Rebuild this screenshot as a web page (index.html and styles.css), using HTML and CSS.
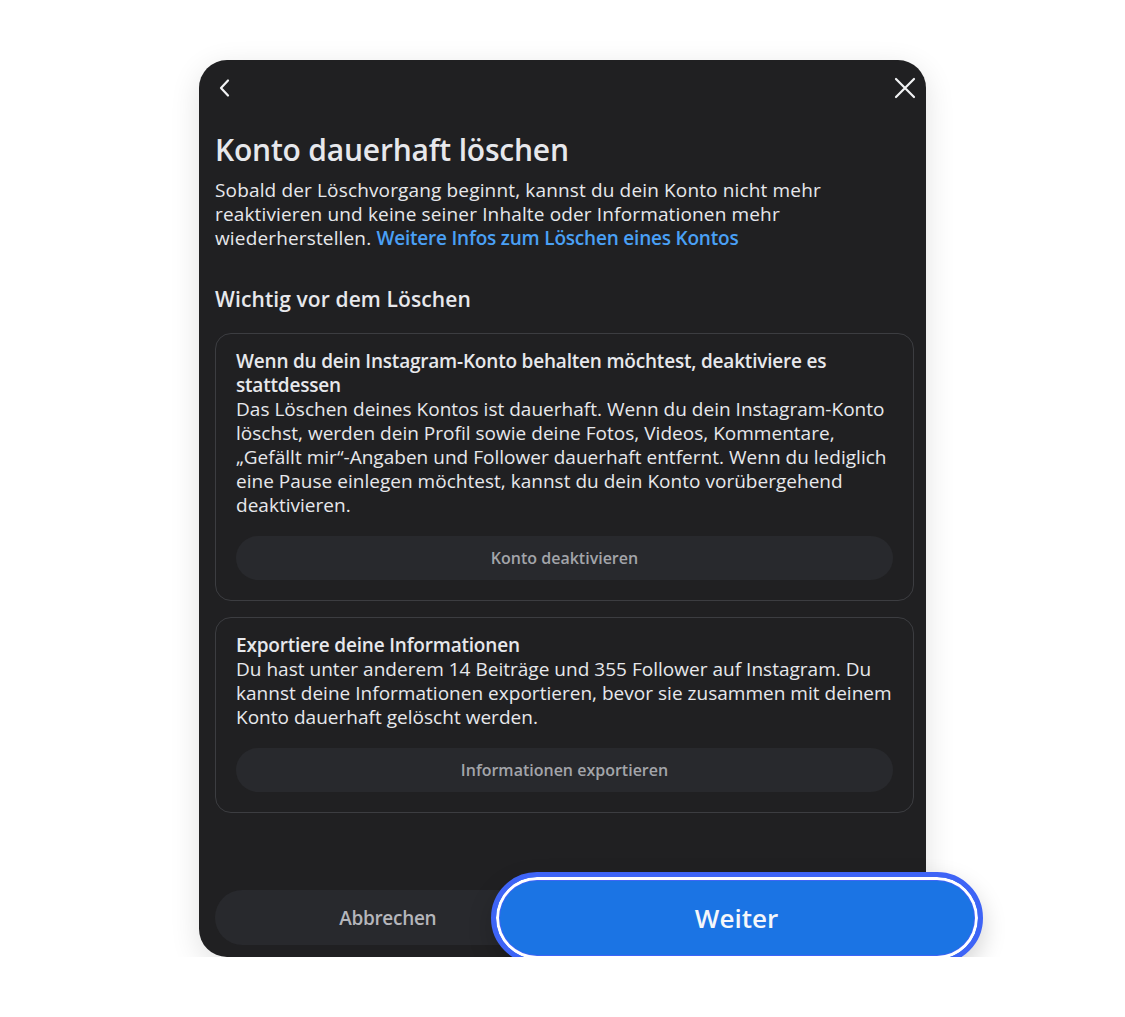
FILE: index.html
```html
<!DOCTYPE html>
<html lang="de">
  <head>
    <meta charset="utf-8">
    <title>Konto dauerhaft löschen</title>
    <link rel="stylesheet" href="styles.css">
  </head>
  <body>
    <div class="dialog">
      <div class="top-bar">
        <button class="icon-button" aria-label="Zurück">
          <svg width="24" height="24" viewBox="0 0 24 24" fill="none" stroke="currentColor" stroke-width="2.2" stroke-linecap="round" stroke-linejoin="round">
            <path d="M15 4.5 L8 12 L15 19.5"/>
          </svg>
        </button>
        <button class="icon-button" aria-label="Schließen">
          <svg width="24" height="24" viewBox="0 0 24 24" fill="none" stroke="currentColor" stroke-width="2.2" stroke-linecap="round">
            <path d="M3 3 L21 21 M21 3 L3 21"/>
          </svg>
        </button>
      </div>

      <h1 class="title">Konto dauerhaft löschen</h1>
      <p class="intro">
        Sobald der Löschvorgang beginnt, kannst du dein Konto nicht mehr reaktivieren und keine seiner Inhalte oder Informationen mehr wiederherstellen.
        <a href="#" class="link">Weitere Infos zum Löschen eines Kontos</a>
      </p>

      <h2 class="section-title">Wichtig vor dem Löschen</h2>

      <div class="info-box">
        <div class="info-title">Wenn du dein Instagram-Konto behalten möchtest, deaktiviere es stattdessen</div>
        <div class="info-text">Das Löschen deines Kontos ist dauerhaft. Wenn du dein Instagram-Konto löschst, werden dein Profil sowie deine Fotos, Videos, Kommentare, „Gefällt mir“-Angaben und Follower dauerhaft entfernt. Wenn du lediglich eine Pause einlegen möchtest, kannst du dein Konto vorübergehend deaktivieren.</div>
        <button class="box-button">Konto deaktivieren</button>
      </div>

      <div class="info-box">
        <div class="info-title">Exportiere deine Informationen</div>
        <div class="info-text">Du hast unter anderem 14 Beiträge und 355 Follower auf Instagram. Du kannst deine Informationen exportieren, bevor sie zusammen mit deinem Konto dauerhaft gelöscht werden.</div>
        <button class="box-button">Informationen exportieren</button>
      </div>

      <div class="footer">
        <button class="cancel-button">Abbrechen</button>
        <div class="next-slot">
          <button class="next-button">Weiter</button>
        </div>
      </div>
    </div>
  </body>
</html>
```

FILE: styles.css
```css
body {
  margin: 0;
  background-color: #ffffff;
  font-family: "Open Sans", "Noto Sans", sans-serif;
  display: flex;
  justify-content: center;
  padding-top: 60px;
}

button {
  font-family: inherit;
  border: none;
  cursor: pointer;
}

.dialog {
  width: 727px;
  height: 897px;
  box-sizing: border-box;
  background-color: #202022;
  border-radius: 28px;
  padding: 0 12px 12px 16px;
  display: flex;
  flex-direction: column;
  color: #e7e8ec;
  box-shadow: 0 8px 30px rgba(0, 0, 0, 0.12);
}

.top-bar {
  display: flex;
  justify-content: space-between;
  align-items: center;
  height: 56px;
  margin: 0 -3px 0 -2px;
}

.icon-button {
  background: none;
  color: #f2f3f5;
  padding: 0;
  width: 24px;
  height: 24px;
  display: flex;
  align-items: center;
  justify-content: center;
}

.title {
  font-size: 30px;
  font-weight: 600;
  margin: 16px 0 0 0;
  line-height: 36px;
  letter-spacing: -0.2px;
}

.intro {
  font-size: 19px;
  line-height: 24px;
  margin: 10px 0 0 0;
  letter-spacing: 0.15px;
}

.link {
  color: #4aa0f6;
  font-weight: 600;
  text-decoration: none;
  letter-spacing: -0.2px;
}

.section-title {
  font-size: 21px;
  font-weight: 600;
  line-height: 26px;
  margin: 36px 0 21px 0;
  letter-spacing: 0.1px;
}

.info-box {
  border: 1px solid #3c3d41;
  border-radius: 16px;
  padding: 15px 20px 20px 20px;
  margin-bottom: 16px;
  display: flex;
  flex-direction: column;
}

.info-title {
  font-size: 19px;
  font-weight: 600;
  line-height: 24px;
  letter-spacing: -0.2px;
}

.info-text {
  font-size: 19px;
  line-height: 24px;
  letter-spacing: 0.02px;
}

.box-button {
  margin-top: 19px;
  height: 44px;
  border-radius: 22px;
  background-color: #28292d;
  color: #a3a5aa;
  font-size: 16px;
  font-weight: 600;
}

.footer {
  margin-top: auto;
  display: grid;
  grid-template-columns: 1fr 1fr;
  gap: 8px;
  height: 55px;
}

.cancel-button {
  border-radius: 28px;
  background-color: #28292d;
  color: #b5b6bb;
  font-size: 19px;
  font-weight: 600;
  letter-spacing: -0.3px;
  padding-right: 6px;
}

.next-slot {
  position: relative;
}

/* highlighted primary action, drawn larger over its slot */
.next-button {
  position: absolute;
  top: -18px;
  left: -78px;
  width: 492px;
  height: 92px;
  box-sizing: border-box;
  border-radius: 46px;
  background-color: #1b74e4;
  color: #f5f7fa;
  font-size: 26px;
  font-weight: 600;
  border: 5px solid #3e64f6;
  box-shadow: 0 0 0 3px #ffffff inset, 0 0 0 4px #3e64f6 inset, 0 10px 24px rgba(0, 0, 0, 0.18);
  outline: none;
}
```
